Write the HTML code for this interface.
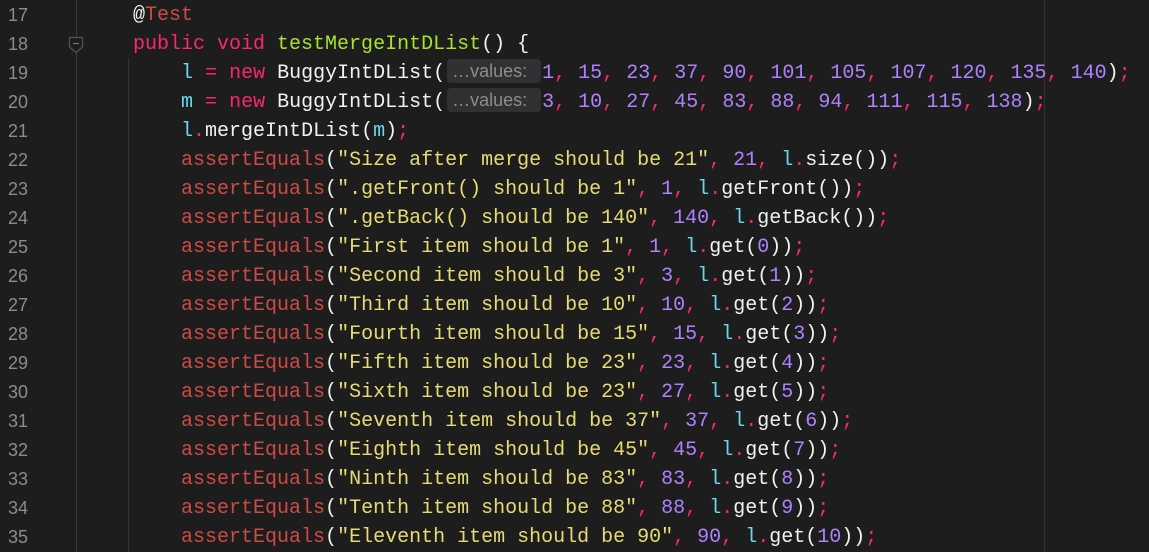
<!DOCTYPE html>
<html><head><meta charset="utf-8"><style>
html,body{margin:0;padding:0;}
body{width:1149px;height:552px;background:#1d1d1e;position:relative;overflow:hidden;font-family:"Liberation Mono","DejaVu Sans Mono",monospace;}
.ln{position:absolute;left:8px;width:40px;color:#8c8c8c;font-size:18px;line-height:29px;font-family:"Liberation Sans","DejaVu Sans",sans-serif;}
.c{position:absolute;left:133px;font-size:20px;line-height:29px;white-space:pre;color:#f2f2ee;}
.k{color:#f92672}.g{color:#a6e22e}.v{color:#66d9ef}.n{color:#ae81ff}.s{color:#e6db74}.r{color:#cc4b45}.p{color:#f92672}
.h{display:inline-block;background:#313133;color:#8d8d8d;font-family:"Liberation Sans","DejaVu Sans",sans-serif;font-size:18px;line-height:24px;height:24px;padding:0 3px 0 5px;border-radius:4px;margin:0 1px 0 2px;vertical-align:1px;width:86px;box-sizing:content-box;}
</style></head><body>
<div style="position:absolute;left:76px;top:0;width:1px;height:552px;background:#3a3a38"></div>
<div style="position:absolute;left:128px;top:58px;width:1px;height:494px;background:#333333"></div>
<div style="position:absolute;left:1044px;top:0;width:1px;height:552px;background:#333333"></div>
<svg style="position:absolute;left:66px;top:36px" width="20" height="20"><path d="M3.5 1.5 H16.5 V11 L10 16.5 L3.5 11 Z" fill="#1d1d1e" stroke="#55554f" stroke-width="1.2"/><path d="M7 7.5 H13" stroke="#77776f" stroke-width="1.2"/></svg>
<div class="ln" style="top:1px">17</div><div class="ln" style="top:30px">18</div><div class="ln" style="top:59px">19</div><div class="ln" style="top:88px">20</div><div class="ln" style="top:117px">21</div><div class="ln" style="top:146px">22</div><div class="ln" style="top:175px">23</div><div class="ln" style="top:204px">24</div><div class="ln" style="top:233px">25</div><div class="ln" style="top:262px">26</div><div class="ln" style="top:291px">27</div><div class="ln" style="top:320px">28</div><div class="ln" style="top:349px">29</div><div class="ln" style="top:378px">30</div><div class="ln" style="top:407px">31</div><div class="ln" style="top:436px">32</div><div class="ln" style="top:465px">33</div><div class="ln" style="top:494px">34</div><div class="ln" style="top:523px">35</div>
<div class="c" style="top:1px">@<span class="r">Test</span></div>
<div class="c" style="top:30px"><span class="k">public void</span> <span class="g">testMergeIntDList</span>() {</div>
<div class="c" style="top:59px">    <span class="v">l</span> <span class="k">=</span> <span class="k">new</span> BuggyIntDList(<span class="h">…values:</span><span class="n">1</span><span class="p">,</span> <span class="n">15</span><span class="p">,</span> <span class="n">23</span><span class="p">,</span> <span class="n">37</span><span class="p">,</span> <span class="n">90</span><span class="p">,</span> <span class="n">101</span><span class="p">,</span> <span class="n">105</span><span class="p">,</span> <span class="n">107</span><span class="p">,</span> <span class="n">120</span><span class="p">,</span> <span class="n">135</span><span class="p">,</span> <span class="n">140</span>)<span class="p">;</span></div>
<div class="c" style="top:88px">    <span class="v">m</span> <span class="k">=</span> <span class="k">new</span> BuggyIntDList(<span class="h">…values:</span><span class="n">3</span><span class="p">,</span> <span class="n">10</span><span class="p">,</span> <span class="n">27</span><span class="p">,</span> <span class="n">45</span><span class="p">,</span> <span class="n">83</span><span class="p">,</span> <span class="n">88</span><span class="p">,</span> <span class="n">94</span><span class="p">,</span> <span class="n">111</span><span class="p">,</span> <span class="n">115</span><span class="p">,</span> <span class="n">138</span>)<span class="p">;</span></div>
<div class="c" style="top:117px">    <span class="v">l</span><span class="k">.</span>mergeIntDList(<span class="v">m</span>)<span class="p">;</span></div>
<div class="c" style="top:146px">    <span class="r">assertEquals</span>(<span class="s">"Size after merge should be 21"</span><span class="p">,</span> <span class="n">21</span><span class="p">,</span> <span class="v">l</span><span class="k">.</span>size())<span class="p">;</span></div>
<div class="c" style="top:175px">    <span class="r">assertEquals</span>(<span class="s">".getFront() should be 1"</span><span class="p">,</span> <span class="n">1</span><span class="p">,</span> <span class="v">l</span><span class="k">.</span>getFront())<span class="p">;</span></div>
<div class="c" style="top:204px">    <span class="r">assertEquals</span>(<span class="s">".getBack() should be 140"</span><span class="p">,</span> <span class="n">140</span><span class="p">,</span> <span class="v">l</span><span class="k">.</span>getBack())<span class="p">;</span></div>
<div class="c" style="top:233px">    <span class="r">assertEquals</span>(<span class="s">"First item should be 1"</span><span class="p">,</span> <span class="n">1</span><span class="p">,</span> <span class="v">l</span><span class="k">.</span>get(<span class="n">0</span>))<span class="p">;</span></div>
<div class="c" style="top:262px">    <span class="r">assertEquals</span>(<span class="s">"Second item should be 3"</span><span class="p">,</span> <span class="n">3</span><span class="p">,</span> <span class="v">l</span><span class="k">.</span>get(<span class="n">1</span>))<span class="p">;</span></div>
<div class="c" style="top:291px">    <span class="r">assertEquals</span>(<span class="s">"Third item should be 10"</span><span class="p">,</span> <span class="n">10</span><span class="p">,</span> <span class="v">l</span><span class="k">.</span>get(<span class="n">2</span>))<span class="p">;</span></div>
<div class="c" style="top:320px">    <span class="r">assertEquals</span>(<span class="s">"Fourth item should be 15"</span><span class="p">,</span> <span class="n">15</span><span class="p">,</span> <span class="v">l</span><span class="k">.</span>get(<span class="n">3</span>))<span class="p">;</span></div>
<div class="c" style="top:349px">    <span class="r">assertEquals</span>(<span class="s">"Fifth item should be 23"</span><span class="p">,</span> <span class="n">23</span><span class="p">,</span> <span class="v">l</span><span class="k">.</span>get(<span class="n">4</span>))<span class="p">;</span></div>
<div class="c" style="top:378px">    <span class="r">assertEquals</span>(<span class="s">"Sixth item should be 23"</span><span class="p">,</span> <span class="n">27</span><span class="p">,</span> <span class="v">l</span><span class="k">.</span>get(<span class="n">5</span>))<span class="p">;</span></div>
<div class="c" style="top:407px">    <span class="r">assertEquals</span>(<span class="s">"Seventh item should be 37"</span><span class="p">,</span> <span class="n">37</span><span class="p">,</span> <span class="v">l</span><span class="k">.</span>get(<span class="n">6</span>))<span class="p">;</span></div>
<div class="c" style="top:436px">    <span class="r">assertEquals</span>(<span class="s">"Eighth item should be 45"</span><span class="p">,</span> <span class="n">45</span><span class="p">,</span> <span class="v">l</span><span class="k">.</span>get(<span class="n">7</span>))<span class="p">;</span></div>
<div class="c" style="top:465px">    <span class="r">assertEquals</span>(<span class="s">"Ninth item should be 83"</span><span class="p">,</span> <span class="n">83</span><span class="p">,</span> <span class="v">l</span><span class="k">.</span>get(<span class="n">8</span>))<span class="p">;</span></div>
<div class="c" style="top:494px">    <span class="r">assertEquals</span>(<span class="s">"Tenth item should be 88"</span><span class="p">,</span> <span class="n">88</span><span class="p">,</span> <span class="v">l</span><span class="k">.</span>get(<span class="n">9</span>))<span class="p">;</span></div>
<div class="c" style="top:523px">    <span class="r">assertEquals</span>(<span class="s">"Eleventh item should be 90"</span><span class="p">,</span> <span class="n">90</span><span class="p">,</span> <span class="v">l</span><span class="k">.</span>get(<span class="n">10</span>))<span class="p">;</span></div>
</body></html>
